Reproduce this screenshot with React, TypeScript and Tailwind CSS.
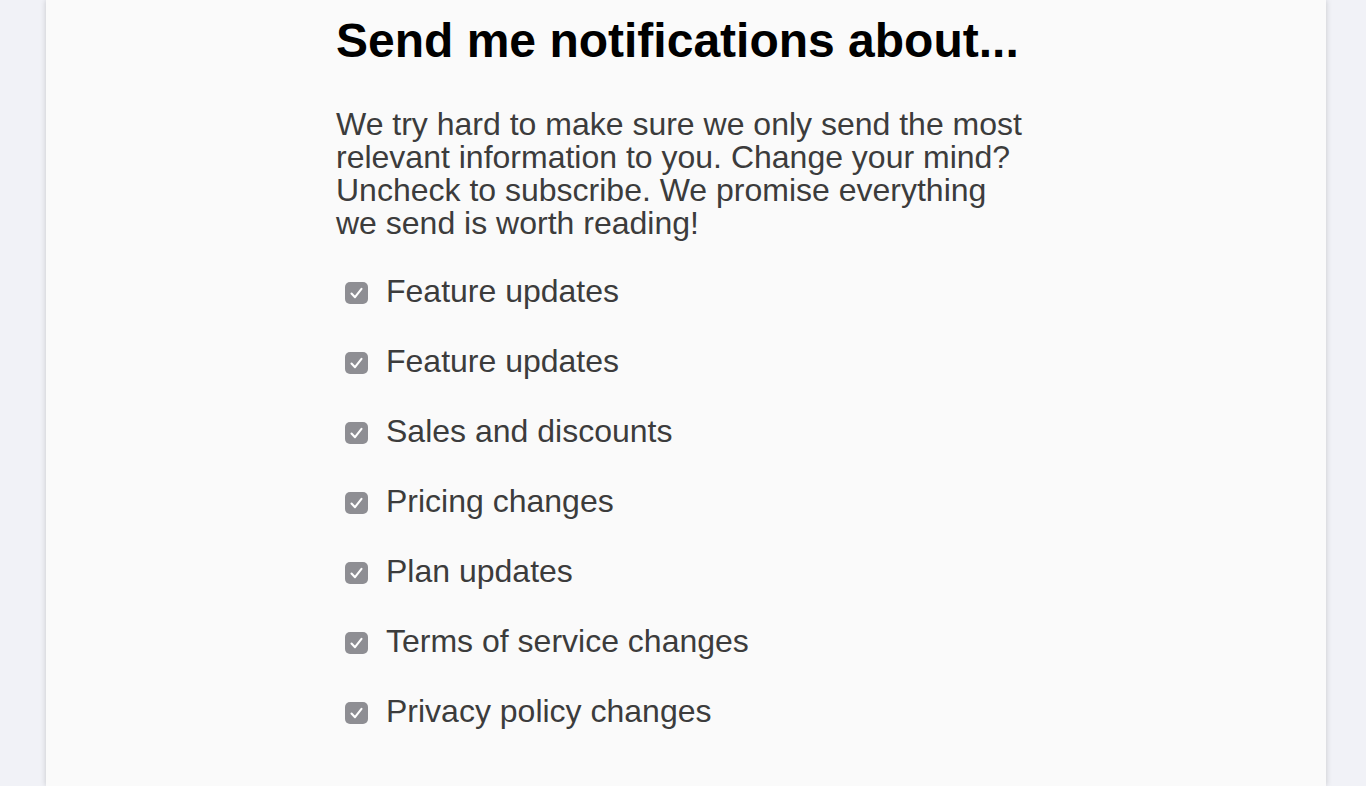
import React from "react";

const items = [
  "Feature updates",
  "Feature updates",
  "Sales and discounts",
  "Pricing changes",
  "Plan updates",
  "Terms of service changes",
  "Privacy policy changes",
];

const Check = () => (
  <span className="mt-[7px] ml-[9px] flex h-[22px] w-[23px] shrink-0 items-center justify-center rounded-[5px] bg-[#8e8e93]">
    <svg width="23" height="22" viewBox="0 0 23 22" fill="none">
      <path
        d="M6.5 11.5 L10 15.2 L16.5 6.8"
        stroke="#ffffff"
        strokeWidth="2.1"
        strokeLinecap="round"
        strokeLinejoin="round"
      />
    </svg>
  </span>
);

const App = () => {
  return (
    <div className="min-h-screen bg-[#f1f2f7] font-['Liberation_Sans',Arial,sans-serif]">
      <div className="ml-[46px] min-h-[786px] w-[1280px] bg-[#fafafa] shadow-[0_0_6px_rgba(0,0,0,0.18)]">
        <div className="mx-auto w-[700px] pt-[17px]">
          <h1 className="text-[48px] leading-[48px] font-bold text-black">
            Send me notifications about...
          </h1>
          <p className="mt-[43px] pr-[8px] text-[32px] leading-[33px] text-[#3c3c3c]">
            We try hard to make sure we only send the most relevant information
            to you. Change your mind? Uncheck to subscribe. We promise
            everything we send is worth reading!
          </p>
          <ul className="mt-[35px] flex flex-col gap-[37px]">
            {items.map((label, i) => (
              <li key={i} className="flex items-start gap-[18px]">
                <Check />
                <span className="text-[32px] leading-[33px] text-[#3c3c3c]">
                  {label}
                </span>
              </li>
            ))}
          </ul>
        </div>
      </div>
    </div>
  );
};

export default App;
